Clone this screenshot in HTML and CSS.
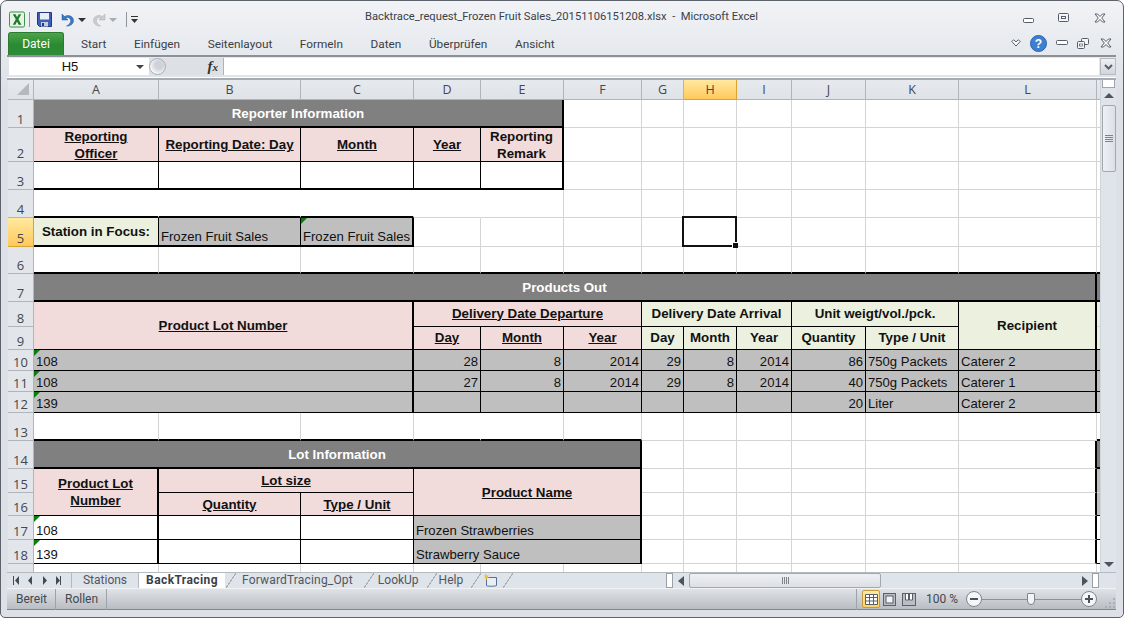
FILE: index.html
```html
<!DOCTYPE html>
<html lang="de">
<head>
<meta charset="utf-8">
<title>Backtrace_request_Frozen Fruit Sales - Microsoft Excel</title>
<link rel="stylesheet" href="styles.css">
</head>
<body>
<div class="app">
  <header class="titlebar">
    <div class="qat">
      <svg class="ico-logo" width="16" height="17" viewBox="0 0 17 17"><rect x=".5" y=".5" width="16" height="16" rx="1.5" fill="#e9f3e4" stroke="#2f8a3c"/><path d="M4 3h3l1.600 3L10.300 3H13L10 8.300 13.200 14h-3L8.500 10.700 6.800 14H4l3.200-5.700z" fill="#1d7a2e"/></svg>
      <i class="qat-sep first"></i>
      <svg class="ico-save" width="15" height="15" viewBox="0 0 15 15"><path d="M.5.500h14v14H2.500l-2-2z" fill="#3f5fb5" stroke="#26377f"/><rect x="3" y="1" width="9" height="6.500" fill="#e8eef8"/><rect x="4" y="10" width="7" height="4.500" fill="#c3cde0"/><rect x="5" y="11" width="2" height="3" fill="#26377f"/></svg>
      <svg class="ico-undo" width="13" height="14" viewBox="0 0 13 14"><path d="M1 1v6h6L4.800 4.900C7.500 3.700 10.200 5.800 9.600 8.500 9.200 10.500 7.600 12 5.500 13c4 .3 7-2.200 7-5.500C12.500 3.600 8 1 3.500 3.500z" fill="#3c79c4" stroke="#1f5aa5" stroke-width=".5"/></svg>
      <i class="caret drop-a"></i>
      <svg class="ico-redo" width="13" height="14" viewBox="0 0 13 14"><path d="M12 1v6H6l2.200-2.100C5.500 3.700 2.800 5.800 3.400 8.500 3.800 10.500 5.400 12 7.500 13c-4 .3-7-2.200-7-5.500C.5 3.600 5 1 9.500 3.500z" fill="#c9cdd1" stroke="#a9adb2" stroke-width=".5"/></svg>
      <i class="caret pale drop-b"></i>
      <i class="qat-sep second"></i>
      <svg class="ico-custom" width="8" height="8" viewBox="0 0 8 8"><rect y="0" width="7" height="1" fill="#333"/><path d="M0 3h7L3.500 7z" fill="#333"/></svg>
    </div>
    <h1 class="doc-title">Backtrace_request_Frozen Fruit Sales_20151106151208.xlsx &nbsp;-&nbsp; Microsoft Excel</h1>
    <div class="win-controls">
      <svg class="win-min" width="11" height="6" viewBox="0 0 11 6"><rect x=".5" y=".5" width="10" height="4" rx="1" fill="#fff" stroke="#555d68"/></svg>
      <svg class="win-max" width="11" height="10" viewBox="0 0 11 10"><rect x=".5" y=".5" width="10" height="8" rx="1" fill="#f4f5f7" stroke="#555d68"/><rect x="3.500" y="3.500" width="4" height="2" fill="#fff" stroke="#555d68"/></svg>
      <svg class="win-close" width="12" height="10" viewBox="0 0 12 10"><path d="M1 1h2.500L6 3.500 8.500 1H11L7.700 5 11 9H8.500L6 6.500 3.500 9H1l3.300-4z" fill="#fff" stroke="#555d68"/></svg>
    </div>
  </header>

  <nav class="ribbon">
    <span class="file-tab">Datei</span>
    <span class="rtab">Start</span>
    <span class="rtab">Einfügen</span>
    <span class="rtab">Seitenlayout</span>
    <span class="rtab">Formeln</span>
    <span class="rtab">Daten</span>
    <span class="rtab">Überprüfen</span>
    <span class="rtab">Ansicht</span>
    <div class="ribbon-tools">
      <svg class="tool-heart" width="10" height="8" viewBox="0 0 10 8"><path d="M.8 2.500 2.500.8 5 2.800 7.500.8 9.200 2.500 5 7z" fill="#fff" stroke="#555d68"/></svg>
      <svg class="tool-help" width="17" height="17" viewBox="0 0 17 17"><circle cx="8.500" cy="8.500" r="8" fill="#3f7fd0" stroke="#2c61ad"/><text x="8.500" y="13" text-anchor="middle" class="help-mark">?</text></svg>
      <svg class="tool-min" width="12" height="6" viewBox="0 0 12 6"><rect x=".5" y=".5" width="11" height="4" rx="1" fill="#fff" stroke="#555d68"/></svg>
      <svg class="tool-restore" width="12" height="11" viewBox="0 0 12 11"><rect x="4.500" y=".5" width="7" height="6" rx="1" fill="#f4f5f7" stroke="#555d68"/><rect x=".5" y="3.500" width="7" height="7" rx="1" fill="#f4f5f7" stroke="#555d68"/><rect x="2.500" y="6" width="3" height="2" fill="#fff" stroke="#555d68" stroke-width=".7"/></svg>
      <svg class="tool-close" width="12" height="10" viewBox="0 0 12 10"><path d="M1 1h2.500L6 3.500 8.500 1H11L7.700 5 11 9H8.500L6 6.500 3.500 9H1l3.300-4z" fill="#fff" stroke="#555d68"/></svg>
    </div>
  </nav>

  <section class="formula">
    <div class="namebox"><span class="name-text">H5</span><i class="caret dark"></i></div>
    <div class="fx-panel">
      <i class="fx-knob"></i>
      <span class="fx">f<sub>x</sub></span>
    </div>
    <div class="fx-input"></div>
    <div class="fx-drop"><svg width="9" height="6" viewBox="0 0 9 6"><path d="M1 1l3.500 3.500L8 1" fill="none" stroke="#5a6068" stroke-width="2"/></svg></div>
  </section>

  <main class="sheet-row">
    <div class="sheet">
      <table class="grid">
        <colgroup>
          <col class="c-h"><col class="c-a"><col class="c-b"><col class="c-c"><col class="c-d"><col class="c-e"><col class="c-f"><col class="c-g"><col class="c-i8"><col class="c-i"><col class="c-j"><col class="c-k"><col class="c-l"><col class="c-m">
        </colgroup>
        <tr class="r0">
          <th class="corner"><i class="corner-tri"></i></th><th>A</th><th>B</th><th>C</th><th>D</th><th>E</th><th>F</th><th>G</th><th class="active">H</th><th>I</th><th>J</th><th>K</th><th>L</th><th class="scrollgap"></th>
        </tr>
        <tr class="r1">
          <th>1</th><td colspan="5" class="band eR">Reporter Information</td><td></td><td></td><td></td><td></td><td></td><td></td><td></td><td></td>
        </tr>
        <tr class="r2">
          <th>2</th><td class="p head er eb"><span class="two">Reporting<br>Officer</span></td><td class="p head er eb">Reporting Date: Day</td><td class="p head er eb">Month</td><td class="p head er eb">Year</td><td class="p bold mid eR eb"><span class="two">Reporting<br>Remark</span></td><td></td><td></td><td></td><td></td><td></td><td></td><td></td><td></td>
        </tr>
        <tr class="r3">
          <th>3</th><td class="er eB"></td><td class="er eB"></td><td class="er eB"></td><td class="er eB"></td><td class="eR eB"></td><td></td><td></td><td></td><td></td><td></td><td></td><td></td><td></td>
        </tr>
        <tr class="r4">
          <th>4</th><td class="nr eB"></td><td class="nr eB"></td><td class="nr eB"></td><td class="nr"></td><td></td><td></td><td></td><td></td><td></td><td></td><td></td><td></td><td></td>
        </tr>
        <tr class="r5">
          <th class="active">5</th><td class="n bold mid er eB">Station in Focus:</td><td class="g er eB">Frozen Fruit Sales</td><td class="g eR eB tri">Frozen Fruit Sales</td><td></td><td></td><td></td><td></td><td></td><td></td><td></td><td></td><td></td><td></td>
        </tr>
        <tr class="r6">
          <th>6</th><td class="eB"></td><td class="eB"></td><td class="eB"></td><td class="eB"></td><td class="eB"></td><td class="eB"></td><td class="eB"></td><td class="eB"></td><td class="eB"></td><td class="eB"></td><td class="eB"></td><td class="eB"></td><td class="eB"></td>
        </tr>
        <tr class="r7">
          <th>7</th><td colspan="12" class="band eR eB">Products Out</td><td class="dark eB"></td>
        </tr>
        <tr class="r8">
          <th>8</th><td colspan="3" rowspan="2" class="p head sp eR eb">Product Lot Number</td><td colspan="3" class="p head er eb">Delivery Date Departure</td><td colspan="3" class="n bold mid er eb">Delivery Date Arrival</td><td colspan="2" class="n bold mid er eb">Unit weigt/vol./pck.</td><td rowspan="2" class="n bold mid sp eR eb">Recipient</td><td class="n"></td>
        </tr>
        <tr class="r9">
          <th>9</th><td class="p head er eb">Day</td><td class="p head er eb">Month</td><td class="p head er eb">Year</td><td class="n bold mid er eb">Day</td><td class="n bold mid er eb">Month</td><td class="n bold mid er eb">Year</td><td class="n bold mid er eb">Quantity</td><td class="n bold mid er eb">Type / Unit</td><td class="n eb"></td>
        </tr>
        <tr class="r10">
          <th>10</th><td colspan="3" class="g eR eb tri">108</td><td class="g num er eb">28</td><td class="g num er eb">8</td><td class="g num er eb">2014</td><td class="g num er eb">29</td><td class="g num er eb">8</td><td class="g num er eb">2014</td><td class="g num er eb">86</td><td class="g er eb">750g Packets</td><td class="g eR eb">Caterer 2</td><td class="g eb"></td>
        </tr>
        <tr class="r11">
          <th>11</th><td colspan="3" class="g eR eb tri">108</td><td class="g num er eb">27</td><td class="g num er eb">8</td><td class="g num er eb">2014</td><td class="g num er eb">29</td><td class="g num er eb">8</td><td class="g num er eb">2014</td><td class="g num er eb">40</td><td class="g er eb">750g Packets</td><td class="g eR eb">Caterer 1</td><td class="g eb"></td>
        </tr>
        <tr class="r12">
          <th>12</th><td colspan="3" class="g eR eb tri">139</td><td class="g er eb"></td><td class="g er eb"></td><td class="g er eb"></td><td class="g er eb"></td><td class="g er eb"></td><td class="g er eb"></td><td class="g num er eb">20</td><td class="g er eb">Liter</td><td class="g eR eb">Caterer 2</td><td class="g eb"></td>
        </tr>
        <tr class="r13">
          <th>13</th><td class="eB"></td><td class="eB"></td><td class="eB"></td><td class="eB nr"></td><td class="eB"></td><td class="eB"></td><td></td><td></td><td></td><td></td><td></td><td></td><td class="eB"></td>
        </tr>
        <tr class="r14">
          <th>14</th><td colspan="6" class="band eR eB">Lot Information</td><td></td><td></td><td></td><td></td><td></td><td class="eR"></td><td class="dark eB"></td>
        </tr>
        <tr class="r15">
          <th>15</th><td rowspan="2" class="p head eR eb">Product Lot <br>Number</td><td colspan="2" class="p head er eb">Lot size</td><td colspan="3" rowspan="2" class="p head eR eb">Product Name</td><td></td><td></td><td></td><td></td><td></td><td class="eR"></td><td class="g"></td>
        </tr>
        <tr class="r16">
          <th>16</th><td class="p head er eb">Quantity</td><td class="p head er eb">Type / Unit</td><td></td><td></td><td></td><td></td><td></td><td class="eR"></td><td class="g eb"></td>
        </tr>
        <tr class="r17">
          <th>17</th><td class="eR eb tri">108</td><td class="er eb"></td><td class="er eb"></td><td colspan="3" class="g eR eb">Frozen Strawberries</td><td></td><td></td><td></td><td></td><td></td><td class="eR"></td><td class="eb"></td>
        </tr>
        <tr class="r18">
          <th>18</th><td class="eR eb tri">139</td><td class="er eb"></td><td class="er eb"></td><td colspan="3" class="g eR eb">Strawberry Sauce</td><td></td><td></td><td></td><td></td><td></td><td class="eR"></td><td class="eb"></td>
        </tr>
        <tr class="r19">
          <th></th><td></td><td></td><td></td><td></td><td></td><td></td><td></td><td></td><td></td><td></td><td></td><td></td><td></td>
        </tr>
      </table>
      <div class="selection"><i class="handle"></i></div>
    </div>
    <aside class="vscroll">
      <i class="split-v"></i>
      <i class="arrow-up"></i>
      <div class="v-thumb"><i></i><i></i><i></i><i></i></div>
      <i class="arrow-down"></i>
    </aside>
  </main>

  <section class="tabs-row">
    <div class="tabnav">
      <svg width="48" height="9" viewBox="0 0 48 9"><path d="M0 0h1v9H0zM6 0v9L2 4.500zM19 0v9l-4-4.500zM30 0v9l4-4.500zM43 0v9l4-4.500zM47 0h1v9h-1z" fill="#444b54"/></svg>
    </div>
    <span class="stab first-tab">Stations</span>
    <span class="stab active-tab">BackTracing</span>
    <i class="slant s1"></i>
    <span class="stab t3">ForwardTracing_Opt</span>
    <i class="slant"></i>
    <span class="stab t4">LookUp</span>
    <i class="slant"></i>
    <span class="stab t5">Help</span>
    <i class="slant"></i>
    <svg class="new-sheet" width="14" height="13" viewBox="0 0 14 13"><path d="M3.500 3.500h10v8c-1 .8-8 1-10 .2z" fill="#e9eef5" stroke="#55708f"/><path d="M3 0l.8 1.800L5.700 1 4.700 3l1.600 1-2 .3-.6 1.800-.8-1.700L1 4.500l1.300-1.400L1.200 1.300z" fill="#f4b93a"/></svg>
    <i class="slant"></i>
    <i class="split-h tab-split"></i>
    <i class="arrow-left"></i>
    <div class="h-thumb"><i></i><i></i><i></i><i></i></div>
    <i class="arrow-right"></i>
    <i class="split-h end-split"></i>
  </section>

  <footer class="status">
    <span class="st-item">Bereit</span>
    <span class="st-item">Rollen</span>
    <div class="st-right">
      <button class="view on"><svg width="13" height="11" viewBox="0 0 13 11"><path d="M.5.500h12v10H.5zM.5 3.500h12M.5 7h12M4.500.5v10M8.500.5v10" fill="#fff" stroke="#59606a"/></svg></button>
      <button class="view page"><svg width="13" height="13" viewBox="0 0 13 13"><rect x=".5" y=".5" width="12" height="12" fill="#b9bec5" stroke="#59606a"/><rect x="3" y="3" width="7" height="7" fill="#f3f4f6" stroke="#59606a"/></svg></button>
      <button class="view"><svg width="14" height="13" viewBox="0 0 14 13"><rect x=".5" y=".5" width="13" height="12" fill="#b9bec5" stroke="#59606a"/><path d="M3.500 1v6h3V1M7.500 1v6h3V1" fill="#fff" stroke="#59606a"/></svg></button>
      <span class="zoom-val">100 %</span>
      <svg class="z-btn" width="16" height="16" viewBox="0 0 16 16"><circle cx="8" cy="8" r="7.500" fill="#f5f6f8" stroke="#7f858d"/><rect x="4" y="7" width="8" height="2" fill="#4b525b"/></svg>
      <div class="slider"><i class="slider-thumb"></i></div>
      <svg class="z-btn" width="16" height="16" viewBox="0 0 16 16"><circle cx="8" cy="8" r="7.500" fill="#f5f6f8" stroke="#7f858d"/><path d="M4 7h3V4h2v3h3v2H9v3H7V9H4z" fill="#4b525b"/></svg>
      <svg class="grip" width="10" height="10" viewBox="0 0 10 10"><path d="M8 0h2v2H8zM4 4h2v2H4zM8 4h2v2H8zM0 8h2v2H0zM4 8h2v2H4zM8 8h2v2H8z" fill="#a9aeb5"/></svg>
    </div>
  </footer>
</div>
</body>
</html>
```
FILE: styles.css
```css
* { box-sizing: border-box; }
html, body { margin: 0; padding: 0; height: 100%; overflow: hidden; background: #fff; }
body { font-family: Roboto, "Open Sans", sans-serif; color: #3b3f45; }
i { display: block; flex: none; }

.app {
  width: 1124px; height: 618px; display: flex; flex-direction: column;
  border: 1px solid #5c636b; border-radius: 7px 7px 5px 5px; overflow: hidden;
  background: linear-gradient(#f1f3f6, #dde1e7 90px, #dde1e7);
  padding: 0 7px 6px 6px;
}

/* title bar */
.titlebar { height: 30px; flex: none; display: grid; grid-template-columns: 1fr auto 1fr; align-items: center; }
.qat { display: flex; align-items: center; padding: 7px 0 0 2px; }
.qat-sep { width: 1px; height: 15px; background: #8f959c; }
.qat-sep.first { margin: 0 7px 0 4px; }
.qat-sep.second { margin: 0 4px 0 9px; }
.ico-undo { margin-left: 9px; }
.ico-redo { margin-left: 7px; }
.caret { width: 0; height: 0; border: 4px solid transparent; border-top-color: #2e3238; border-bottom: 0; }
.caret.pale { border-top-color: #a8adb3; }
.drop-a { margin-left: 4px; }
.drop-b { margin-left: 3px; }
.doc-title { margin: 1px 0 0; font-size: 11.200px; line-height: 16px; font-weight: 400; color: #3c4148; white-space: nowrap; }
.win-controls { display: flex; justify-content: flex-end; align-items: flex-start; padding: 12px 10px 0 0; height: 30px; }
.win-min { margin-top: 5px; }
.win-max { margin-left: 24px; }
.win-close { margin-left: 25px; }

/* ribbon */
.ribbon { height: 26px; flex: none; display: flex; align-items: center; padding-left: 1px; border-bottom: 2px solid #8c9198; }
.file-tab {
  width: 56px; height: 23px; margin: 1px 17px 0 0; border-radius: 3px 3px 0 0; text-align: center;
  font-size: 12px; line-height: 22px; color: #fff; border: 1px solid #2a7a2f; border-bottom: 0;
  background: linear-gradient(#4ea24c, #2a8a31 55%, #2f8c3a);
}
.rtab { font-size: 11.800px; line-height: 16px; margin-right: 27.600px; color: #3b3f45; white-space: nowrap; padding-top: 1px; }
.ribbon-tools { margin-left: auto; display: flex; align-items: center; padding-right: 4px; }
.tool-help { margin-left: 9px; }
.tool-min { margin-left: 9px; }
.tool-restore { margin-left: 9px; }
.tool-close { margin-left: 11px; }
.help-mark { font: 700 12px "Liberation Sans", sans-serif; fill: #fff; }

/* formula bar */
.formula { height: 22px; flex: none; display: flex; padding-bottom: 4px; margin-top: 1px; position: relative; border-bottom: 2px solid #a7acb3; box-shadow: inset 0 -1px #fff; }
.namebox { width: 140px; height: 17px; margin-left: 2px; background: #fff; display: flex; align-items: center; padding: 0 4px 0 1px; }
.name-text { flex: 1; text-align: center; font: 13px/17px "Liberation Sans", sans-serif; color: #111; padding-right: 6px; }
.caret.dark { border-top-color: #444; margin-right: 1px; }
.fx-panel { width: 75px; height: 17px; position: relative; background: #dde1e6; display: flex; justify-content: flex-end; border-right: 1px solid #aeb3b9; }
.fx-knob { position: absolute; left: 0; top: 0; width: 17px; height: 17px; border: 1px solid #a9aeb5; border-radius: 50%; background: radial-gradient(circle at 60% 40%, #cfd3d9 30%, #f4f5f7 70%); }
.fx { font: italic 700 15px/16px "Liberation Serif", serif; color: #333; padding-right: 5px; }
.fx sub { font-size: 11px; vertical-align: baseline; }
.fx-input { flex: 1; height: 17px; background: #fff; }
.fx-drop { width: 16px; height: 17px; margin-left: 1px; background: linear-gradient(#eef0f3, #d2d6dc); border: 1px solid #b7bcc3; display: flex; align-items: center; justify-content: center; }

/* sheet */
.sheet-row { height: 492px; flex: none; display: flex; }
.sheet { width: 1092px; height: 492px; overflow: hidden; position: relative; background: #fff; margin-left: 1px; }
.grid { width: 1109px; table-layout: fixed; border-collapse: separate; border-spacing: 0; font: 13.100px/16px "Liberation Sans", Arial, sans-serif; color: #111; }
.c-h { width: 26px; } .c-a { width: 125px; } .c-b { width: 142px; } .c-c { width: 113px; }
.c-d { width: 67px; } .c-e { width: 83px; } .c-f { width: 78px; } .c-g { width: 42px; }
.c-i8 { width: 53px; } .c-i { width: 55px; } .c-j { width: 74px; } .c-k { width: 93px; }
.c-l { width: 138px; } .c-m { width: 20px; }

.grid td { padding: 0 2px; border-right: 1px solid #d4d4d4; border-bottom: 1px solid #d4d4d4; vertical-align: bottom; white-space: nowrap; overflow: hidden; position: relative; }
.grid th { padding: 0; background: #e2e5ea; border-right: 1px solid #b1b5bb; border-bottom: 1px solid #b1b5bb; font: 400 13px/16px "Open Sans", sans-serif; color: #43484f; text-align: center; vertical-align: bottom; }
.grid .r0 th { vertical-align: middle; background: linear-gradient(#e6e9ed, #dfe2e7); font-size: 12.500px; }
.grid th.active, .grid .r0 th.active { background: linear-gradient(#ffe9a0, #ffc95c); border-right-color: #d9a32f; border-bottom-color: #d9a32f; }
.grid .r0 th.scrollgap { border-right: 0; }
.corner { position: relative; }
.corner-tri { position: absolute; right: 4px; bottom: 4px; width: 0; height: 0; border: 6px solid transparent; border-right-color: #b5b9bf; border-bottom-color: #b5b9bf; }

.r0 { height: 20px; } .r1 { height: 28px; } .r2 { height: 34px; } .r3 { height: 28px; } .r4 { height: 28px; }
.r5 { height: 29px; } .r6 { height: 27px; } .r7 { height: 28px; } .r8 { height: 25px; } .r9 { height: 23px; }
.r10, .r11, .r12 { height: 21px; } .r13 { height: 28px; } .r14 { height: 28px; } .r15 { height: 24px; }
.r16 { height: 23px; } .r17, .r18 { height: 24px; } .r19 { height: 26px; }

.grid td.band { background: #808080; color: #fff; font-weight: 700; font-size: 13.330px; text-align: center; vertical-align: middle; border-bottom: 2px solid #000; padding: 2px 0 0; }
.grid td.dark { background: #808080; }
.grid td.p { background: #f2dcdb; }
.grid td.n { background: #ebf1de; }
.grid td.g { background: #bfbfbf; }
.grid td.head { font-weight: 700; font-size: 13.330px; text-decoration: underline; text-align: center; vertical-align: middle; line-height: 17px; padding: 0; }
.grid td.bold { font-weight: 700; font-size: 13.330px; }
.grid td.mid { text-align: center; vertical-align: middle; line-height: 17px; padding: 0; }
.two { display: block; height: 33px; }
.r8 td.head:not(.sp), .r8 td.mid:not(.sp), .r9 td.mid, .r9 td.head { padding-bottom: 2px; }
.grid td.num { text-align: right; }
.grid td.er { border-right: 1px solid #000; }
.grid td.eR { border-right: 2px solid #000; }
.grid td.eb { border-bottom: 1px solid #000; }
.grid td.eB { border-bottom: 2px solid #000; }
.grid td.nr { border-right-color: transparent; }
.tri::before { content: ""; position: absolute; left: 0; top: 0; border: 3px solid transparent; border-top-color: #0a7d0a; border-left-color: #0a7d0a; }

.selection { position: absolute; left: 674px; top: 136px; width: 55px; height: 31px; border: 2px solid #111; }
.handle { position: absolute; right: -3px; bottom: -3px; width: 6px; height: 6px; background: #111; border: 1px solid #fff; border-width: 1px 0 0 1px; }

/* vertical scrollbar */
.vscroll { width: 16px; flex: none; background: #dfe3ea; display: flex; flex-direction: column; align-items: center; border-left: 1px solid #cfd3da; }
.split-v { width: 13px; height: 8px; background: #fff; border: 1px solid #a0a5ac; border-top: 0; }
.arrow-up { margin-top: 5px; border: 5px solid transparent; border-bottom: 5px solid #4e545c; border-top: 0; }
.v-thumb { width: 14px; height: 67px; margin-top: 7px; border: 1px solid #a3a8af; border-radius: 2px; background: linear-gradient(90deg, #eef0f4, #dce0e6); display: flex; flex-direction: column; align-items: center; justify-content: center; gap: 1px; }
.v-thumb i { width: 8px; height: 1px; background: #7d838b; }
.arrow-down { margin-top: auto; margin-bottom: 5px; border: 5px solid transparent; border-top: 5px solid #4e545c; border-bottom: 0; }

/* sheet tabs + horizontal scrollbar */
.tabs-row { height: 16px; flex: none; display: flex; align-items: center; background: #dfe3ea; border-top: 1px solid #b5bac1; font-size: 12px; }
.tabnav { width: 62px; padding-left: 6px; flex: none; display: flex; }
.stab { height: 15px; line-height: 15px; font-size: 12px; white-space: nowrap; color: #50565e; flex: none; }
.first-tab { width: 68px; margin-left: 2px; text-align: center; border: 1px solid #b5bac1; border-bottom: 0; border-width: 0 1px; }
.active-tab { width: 86px; text-align: center; background: #fff; font-weight: 700; color: #3b3f45; letter-spacing: .4px; }
.slant { width: 10px; height: 15px; flex: none; background: linear-gradient(to top left, transparent 46%, #aab0b8 46%, #aab0b8 54%, transparent 54%); }
.s1 { margin-left: 1px; }
.t3 { margin-left: 6px; margin-right: 11px; letter-spacing: .17px; }
.t4 { margin-left: 4px; margin-right: 8px; }
.t5 { margin-left: 2px; margin-right: 8px; }
.new-sheet { margin-left: 2px; margin-right: 6px; flex: none; }
.split-h { width: 7px; height: 15px; background: #fff; border: 1px solid #9ba0a7; flex: none; }
.tab-split { margin-left: auto; }
.arrow-left { margin-left: 5px; border: 5px solid transparent; border-right: 6px solid #4e545c; border-left: 0; }
.h-thumb { width: 192px; height: 15px; margin-left: 5px; border: 1px solid #a3a8af; border-radius: 2px; background: linear-gradient(#eef0f4, #dce0e6); display: flex; align-items: center; justify-content: center; gap: 1px; flex: none; }
.h-thumb i { width: 1px; height: 7px; background: #7d838b; }
.arrow-right { margin-left: 201px; border: 5px solid transparent; border-left: 6px solid #4e545c; border-right: 0; }
.end-split { margin-left: 4px; margin-right: 17px; }

/* status bar */
.status { height: 22px; flex: none; display: flex; align-items: center; background: linear-gradient(#dfe2e6, #b9bec4); border-top: 1px solid #f0f2f4; border-bottom: 1px solid #81868d; font-size: 12px; color: #43484f; }
.st-item { height: 21px; line-height: 20px; padding: 0 8px 0 9px; border-right: 1px solid #9ea3aa; }
.st-right { margin-left: auto; display: flex; align-items: center; height: 21px; padding-right: 1px; border-left: 1px solid #9ea3aa; padding-left: 5px; }
.view { width: 15px; height: 18px; margin: 0 4px 0 0; padding: 0; background: none; border: 0; display: flex; align-items: center; justify-content: center; }
.view.on { width: 18px; background: linear-gradient(#ffe9a6, #ffd264); border: 1px solid #c89a3c; border-radius: 2px; margin-right: 2px; }
.zoom-val { margin: 0 9px 0 6px; width: 31px; white-space: nowrap; }
.slider { width: 99px; height: 1px; background: #8c9198; position: relative; }
.slider-thumb { position: absolute; left: 45px; top: -6px; width: 8px; height: 12px; background: #f3f4f6; border: 1px solid #7f858d; border-radius: 1px 1px 4px 4px; }
.grip { margin: 7px 0 0 8px; }
```
